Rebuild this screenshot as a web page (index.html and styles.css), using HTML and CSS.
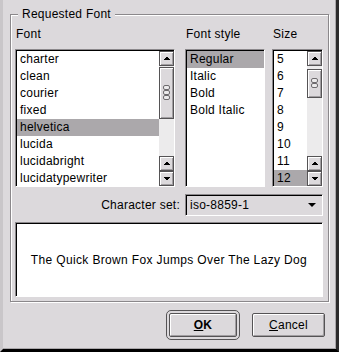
FILE: index.html
```html
<!DOCTYPE html>
<html>
<head>
  <meta charset="UTF-8">
  <title>Select Font</title>
  <link rel="stylesheet" href="styles.css">
</head>
<body>
  <div class="dialog">
    <div class="group">
      <div class="group-title">Requested Font</div>

      <div class="fields">
        <div class="col col-font">
          <div class="label">Font</div>
          <div class="listbox">
            <ul class="items">
              <li>charter</li>
              <li>clean</li>
              <li>courier</li>
              <li>fixed</li>
              <li class="selected">helvetica</li>
              <li>lucida</li>
              <li>lucidabright</li>
              <li>lucidatypewriter</li>
            </ul>
            <div class="vscroll">
              <div class="sbtn"><svg width="13" height="13"><polygon points="3,8 10,8 6.5,4.5"/></svg></div>
              <div class="thumb thumb-font">
                <svg width="9" height="16">
                  <rect x="1.5" y="0.5" width="6" height="4" rx="1.5"/>
                  <rect x="1.5" y="5.5" width="6" height="4" rx="1.5"/>
                  <rect x="1.5" y="10.5" width="6" height="4" rx="1.5"/>
                </svg>
              </div>
              <div class="trough"></div>
              <div class="sbtn"><svg width="13" height="13"><polygon points="3,8 10,8 6.5,4.5"/></svg></div>
              <div class="sbtn"><svg width="13" height="13"><polygon points="3,5 10,5 6.5,8.5"/></svg></div>
            </div>
          </div>
        </div>

        <div class="col col-style">
          <div class="label">Font style</div>
          <div class="listbox">
            <ul class="items">
              <li class="selected">Regular</li>
              <li>Italic</li>
              <li>Bold</li>
              <li>Bold Italic</li>
            </ul>
          </div>
        </div>

        <div class="col col-size">
          <div class="label">Size</div>
          <div class="listbox">
            <ul class="items">
              <li>5</li>
              <li>6</li>
              <li>7</li>
              <li>8</li>
              <li>9</li>
              <li>10</li>
              <li>11</li>
              <li class="selected">12</li>
            </ul>
            <div class="vscroll">
              <div class="sbtn"><svg width="13" height="13"><polygon points="3,8 10,8 6.5,4.5"/></svg></div>
              <div class="thumb thumb-size">
                <svg width="9" height="11">
                  <rect x="1.5" y="0.5" width="6" height="4" rx="1.5"/>
                  <rect x="1.5" y="5.5" width="6" height="4" rx="1.5"/>
                </svg>
              </div>
              <div class="trough"></div>
              <div class="sbtn"><svg width="13" height="13"><polygon points="3,8 10,8 6.5,4.5"/></svg></div>
              <div class="sbtn"><svg width="13" height="13"><polygon points="3,5 10,5 6.5,8.5"/></svg></div>
            </div>
          </div>
        </div>
      </div>

      <div class="charset">
        <span>Character set:</span>
        <div class="combo">
          <span>iso-8859-1</span>
          <svg width="12" height="12"><polygon points="2,4 10,4 6,8"/></svg>
        </div>
      </div>

      <div class="preview">The Quick Brown Fox Jumps Over The Lazy Dog</div>
    </div>

    <div class="buttons">
      <button class="btn btn-default"><u>O</u>K</button>
      <button class="btn"><u>C</u>ancel</button>
    </div>
  </div>
</body>
</html>
```
FILE: styles.css
```css
body {
  margin: 0;
  background-color: #dcd9dc;
  font-family: "Liberation Sans", Arial, sans-serif;
  font-size: 12px;
  letter-spacing: 0.25px;
  color: #000;
}

.dialog {
  width: 339px;
  height: 352px;
  box-sizing: border-box;
  padding-top: 14px;
  border-left: 3px solid #c9c6c9;
  border-right: 3px solid #2b2a2b;
  border-bottom: 3px solid #000;
  box-shadow: inset -1px -1px 0 #aaa7aa;
}

/* group box */
.group {
  width: 319px;
  margin-left: 7px;
  box-sizing: border-box;
  padding: 0 5px 4px 4px;
  border: 1px solid #8b888b;
  box-shadow: inset 1px 1px 0 #fff, 1px 1px 0 #fff;
}

.group-title {
  width: max-content;
  margin: -8px 0 0 3px;
  padding: 0 4px;
  line-height: 14px;
  background-color: #dcd9dc;
}

.fields {
  display: flex;
  margin-top: 6px;
}

.col {
  display: flex;
  flex-direction: column;
  gap: 8px;
}
.col-font { width: 160px; }
.col-style { width: 80px; margin-left: 10px; }
.col-size { width: 51px; margin-left: 7px; }

.label {
  line-height: 14px;
  padding-left: 1px;
}

/* list boxes */
.listbox {
  display: flex;
  height: 138px;
  box-sizing: border-box;
  border: 1px solid;
  border-color: #8b888b #fff #fff #8b888b;
  box-shadow: inset 1px 1px 0 #000;
  padding: 1px 0 0 1px;
  background-color: #fff;
}

.items {
  flex: 1;
  margin: 0;
  padding: 0;
  list-style: none;
  overflow: hidden;
}
.items li {
  height: 17px;
  line-height: 17px;
  padding-left: 3px;
  white-space: nowrap;
}
.items li.selected {
  background-color: #aba8ab;
}

/* scrollbars */
.vscroll {
  width: 15px;
  display: flex;
  flex-direction: column;
  background-color: #ecebec;
}
.sbtn,
.thumb {
  box-sizing: border-box;
  border: 1px solid #555355;
  background-color: #dcd9dc;
  box-shadow: inset 1px 1px 0 #fff, inset -1px -1px 0 #a19ea1;
}
.sbtn {
  height: 15px;
}
.sbtn svg {
  display: block;
  fill: #000;
  shape-rendering: crispEdges;
}
.thumb {
  display: flex;
  align-items: center;
  justify-content: center;
}
.thumb svg rect {
  fill: #ecebec;
  stroke: #6e6b6e;
  stroke-width: 1;
}
.thumb-font { height: 52px; margin-top: 1px; }
.thumb-size { height: 29px; margin-top: 3px; }
.trough { flex: 1; }

/* character set */
.charset {
  display: flex;
  align-items: center;
  justify-content: flex-end;
  gap: 5px;
  margin-top: 7px;
}
.combo {
  width: 138px;
  height: 22px;
  box-sizing: border-box;
  display: flex;
  align-items: center;
  justify-content: space-between;
  padding: 0 4px 0 4px;
  border: 1px solid;
  border-color: #8b888b #fff #fff #8b888b;
  box-shadow: inset 1px 1px 0 #000;
}
.combo svg {
  fill: #000;
}

/* preview */
.preview {
  height: 75px;
  margin-top: 6px;
  box-sizing: border-box;
  display: flex;
  align-items: center;
  justify-content: center;
  letter-spacing: 0.35px;
  background-color: #fff;
  border: 1px solid;
  border-color: #8b888b #fff #fff #8b888b;
  box-shadow: inset 1px 1px 0 #000;
}

/* buttons */
.buttons {
  display: flex;
  justify-content: flex-end;
  gap: 15px;
  padding: 11px 11px 0 0;
}
.btn {
  height: 24px;
  padding: 0;
  font-family: "Liberation Sans", Arial, sans-serif;
  font-size: 12px;
  letter-spacing: 0.25px;
  color: #000;
  background-color: #dcd9dc;
  border: 1px solid #555355;
  border-radius: 2px;
  box-shadow: inset 1px 1px 0 #fff, inset -1px -1px 0 #a19ea1;
  width: 73px;
}
.btn-default {
  width: 68px;
  font-weight: bold;
  outline: 1px solid #555355;
  outline-offset: 2px;
}
```
